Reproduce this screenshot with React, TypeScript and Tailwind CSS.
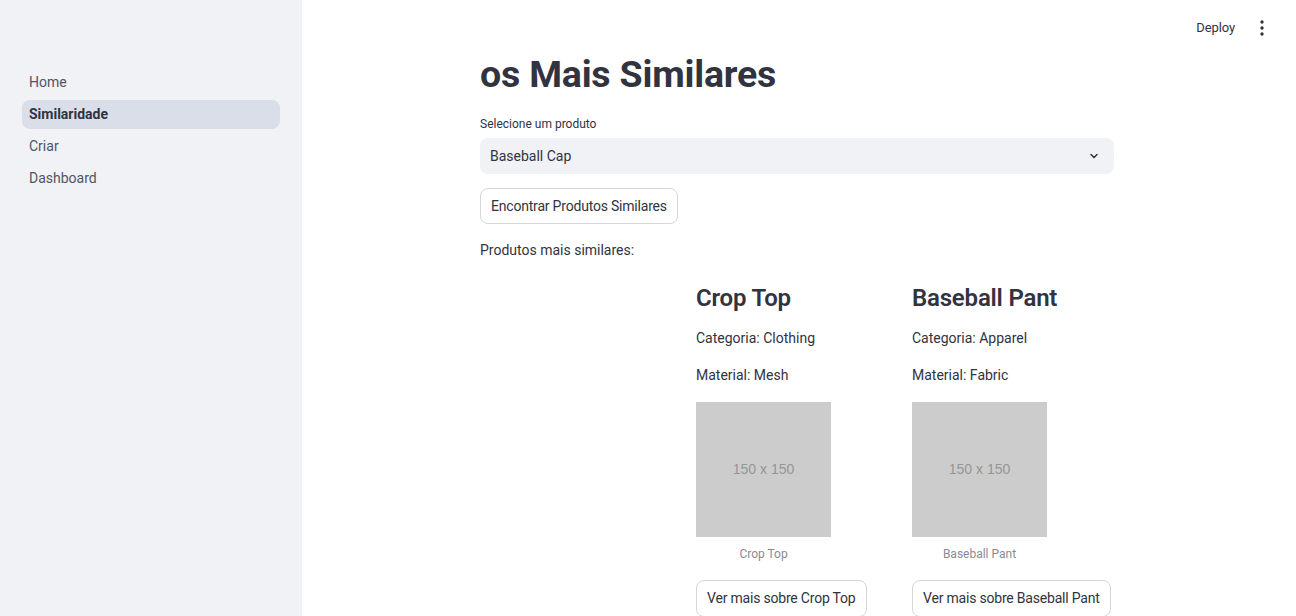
import React from "react";

const font = { fontFamily: '"Roboto", "Liberation Sans", sans-serif' };

function NavItem({ label, active }: { label: string; active?: boolean }) {
  return (
    <div
      className={
        "h-[29px] flex items-center px-[7px] rounded-[8px] text-[14px] " +
        (active ? "bg-[#dadee8] font-bold text-[#31333f]" : "text-[#505464]")
      }
    >
      {label}
    </div>
  );
}

function Product({ name, cat, mat }: { name: string; cat: string; mat: string }) {
  return (
    <div className="flex flex-col w-[200px]">
      <h3 className="text-[24px] font-semibold leading-[36px] text-[#31333f] tracking-[-0.2px]">{name}</h3>
      <p className="text-[14px] leading-[22px] text-[#31333f] mt-[11px]">{cat}</p>
      <p className="text-[14px] leading-[22px] text-[#31333f] mt-[15px]">{mat}</p>
      <div className="mt-[16px] w-[135px] h-[135px] bg-[#cccccc] flex items-center justify-center">
        <span className="text-[14px] text-[#969696]" style={{ fontFamily: '"Liberation Sans", Arial, sans-serif' }}>
          150 x 150
        </span>
      </div>
      <div className="w-[135px] text-center text-[12px] text-[#8a8b92] mt-[8px] leading-[18px]">{name}</div>
      <div className="mt-[17px]">
        <button className="h-[37px] px-[10px] rounded-[8px] border border-[#d6d6d9] bg-white text-[14px] tracking-[-0.2px] text-[#31333f] whitespace-nowrap">
          Ver mais sobre {name}
        </button>
      </div>
    </div>
  );
}

export default function App() {
  return (
    <div className="w-[1296px] h-[616px] flex overflow-hidden bg-white" style={font}>
      <aside className="w-[302px] shrink-0 bg-[#f0f2f6] pt-[68px] px-[22px] flex flex-col gap-[3px]">
        <NavItem label="Home" />
        <NavItem label="Similaridade" active />
        <NavItem label="Criar" />
        <NavItem label="Dashboard" />
      </aside>
      <main className="relative flex-1">
        <div className="absolute top-[16px] right-[26px] flex items-center gap-[19px] text-[13px] text-[#31333f]">
          <span className="tracking-[-0.1px]">Deploy</span>
          <svg width="16" height="24" viewBox="0 0 16 24">
            <circle cx="8" cy="6" r="1.7" fill="#31333f" />
            <circle cx="8" cy="12" r="1.7" fill="#31333f" />
            <circle cx="8" cy="18" r="1.7" fill="#31333f" />
          </svg>
        </div>
        <div className="w-[634px] ml-[178px] pt-[50px] flex flex-col">
          <h1 className="text-[37.5px] font-bold leading-[48px] text-[#31333f] tracking-[-0.2px]">os Mais Similares</h1>
          <label className="text-[12px] text-[#31333f] mt-[18px] leading-[16px]">Selecione um produto</label>
          <div className="mt-[6px] h-[36px] rounded-[8px] bg-[#f0f2f6] flex items-center justify-between pl-[10px] pr-[14px]">
            <span className="text-[14px] text-[#31333f]">Baseball Cap</span>
            <svg width="12" height="12" viewBox="0 0 24 24" fill="none" stroke="#31333f" strokeWidth="3" strokeLinecap="round" strokeLinejoin="round">
              <path d="M6 9l6 6 6-6" />
            </svg>
          </div>
          <div className="mt-[14px]">
            <button className="h-[36px] px-[10px] rounded-[8px] border border-[#d6d6d9] bg-white text-[14px] tracking-[-0.2px] text-[#31333f] whitespace-nowrap">
              Encontrar Produtos Similares
            </button>
          </div>
          <p className="mt-[15px] text-[14px] leading-[22px] text-[#31333f]">Produtos mais similares:</p>
          <div className="mt-[19px] grid grid-cols-[200px_200px_200px] gap-[16px]">
            <div />
            <Product name="Crop Top" cat="Categoria: Clothing" mat="Material: Mesh" />
            <Product name="Baseball Pant" cat="Categoria: Apparel" mat="Material: Fabric" />
          </div>
        </div>
      </main>
    </div>
  );
}
